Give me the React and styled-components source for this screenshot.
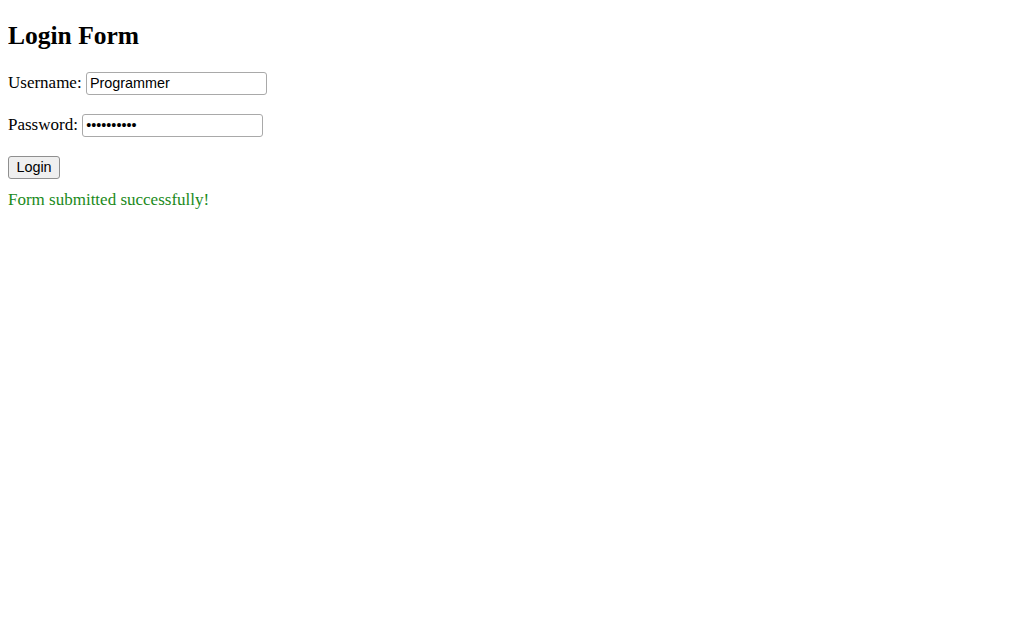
import React, { useState } from 'react';
import styled, { createGlobalStyle } from 'styled-components';

const GlobalStyle = createGlobalStyle`
  body {
    margin: 8px;
    font-family: "Liberation Serif", "Times New Roman", serif;
    font-size: 17px;
    color: #000;
    background: #fff;
  }
`;

const Title = styled.h2`
  font-size: 25.5px;
  font-weight: bold;
  margin: 12.7px 0 21.2px;
`;

const Form = styled.form`
  margin: 0;
`;

const Row = styled.div`
  margin: 0 0 ${p => (p.$last ? 0 : 19)}px;
`;

const Field = styled.input`
  box-sizing: border-box;
  font-family: "Liberation Sans", Arial, sans-serif;
  font-size: 14.4px;
  height: 23px;
  width: 181px;
  padding: 1px 3px;
  border: 1px solid #a9a9a9;
  border-radius: 3px;
  color: #000;
`;

const Button = styled.button`
  box-sizing: border-box;
  font-family: "Liberation Sans", Arial, sans-serif;
  font-size: 14.4px;
  height: 23px;
  width: 52px;
  padding: 0 6px;
  border: 1px solid #8f8f8f;
  border-radius: 3px;
  background: #efefef;
  color: #000;
`;

const Message = styled.p`
  color: #1a8a1a;
  margin: 11px 0 0;
`;

export default function App() {
  const [username, setUsername] = useState('Programmer');
  const [password, setPassword] = useState('secret1234');

  return (
    <>
      <GlobalStyle />
      <Title>Login Form</Title>
      <Form onSubmit={e => e.preventDefault()}>
        <Row>
          <label>
            Username:{' '}
            <Field
              type="text"
              value={username}
              onChange={e => setUsername(e.target.value)}
            />
          </label>
        </Row>
        <Row>
          <label>
            Password:{' '}
            <Field
              type="password"
              value={password}
              onChange={e => setPassword(e.target.value)}
            />
          </label>
        </Row>
        <Row $last>
          <Button type="submit">Login</Button>
        </Row>
      </Form>
      <Message>Form submitted successfully!</Message>
    </>
  );
}
